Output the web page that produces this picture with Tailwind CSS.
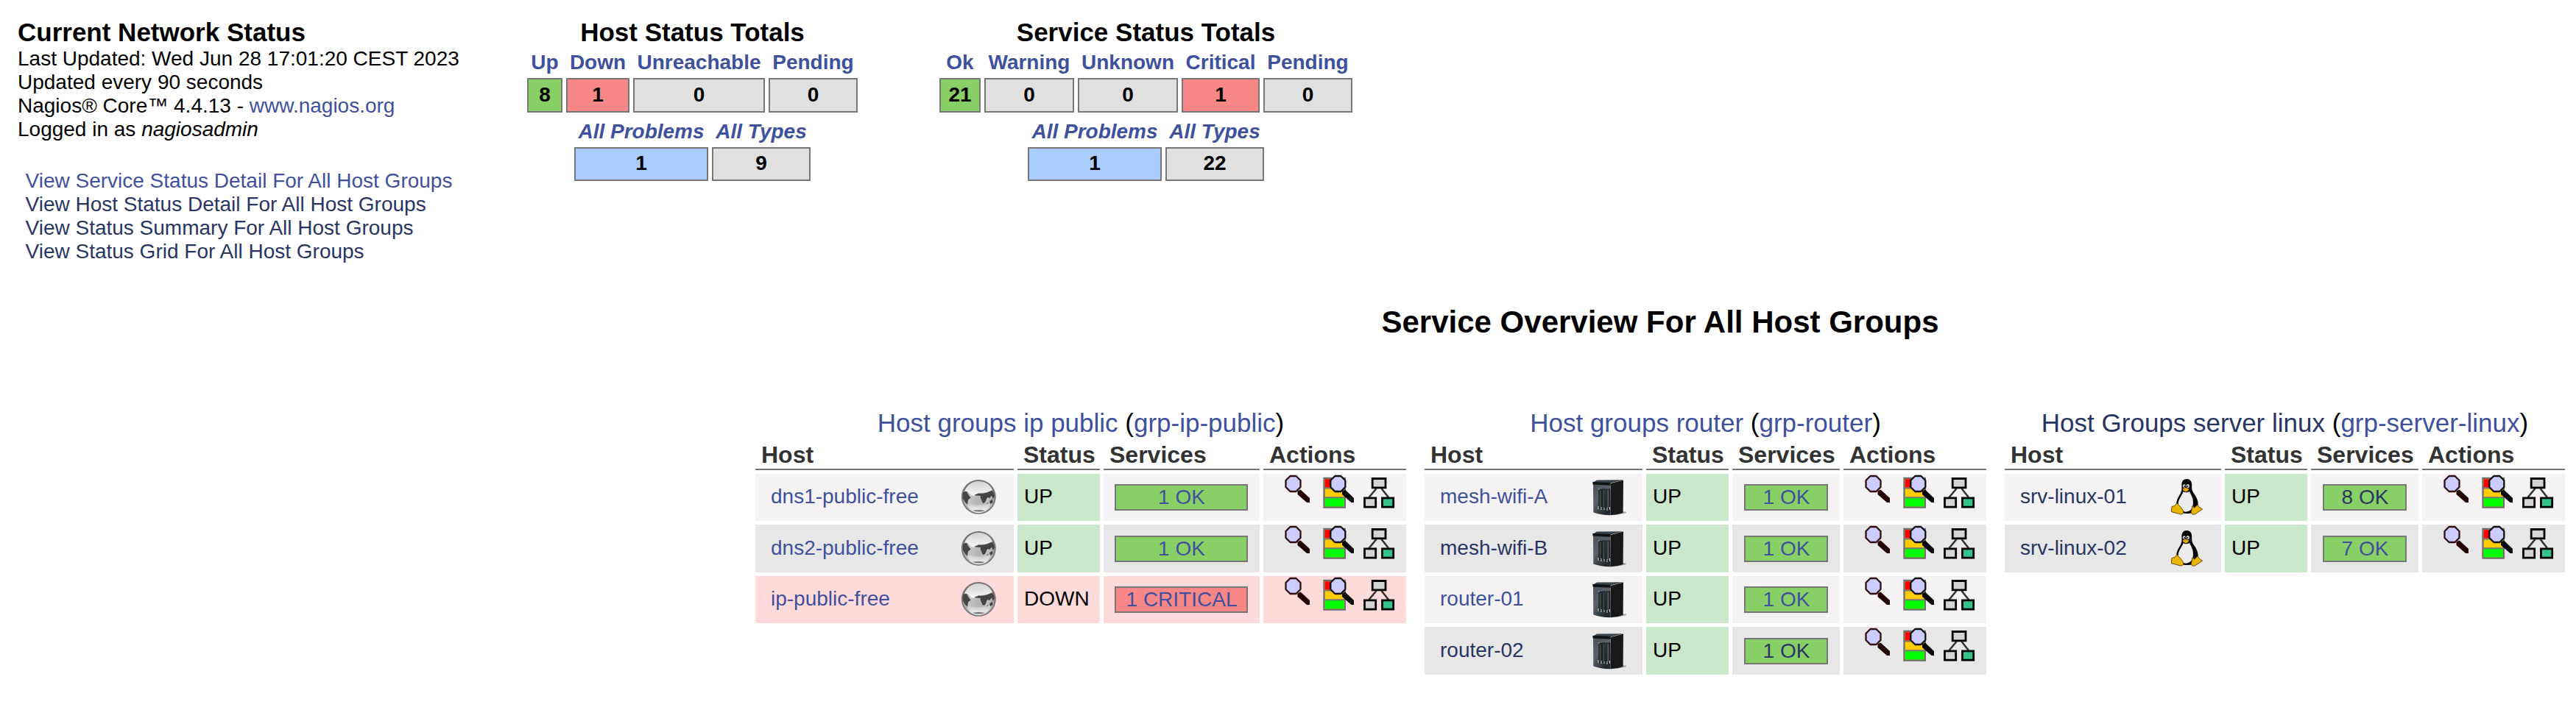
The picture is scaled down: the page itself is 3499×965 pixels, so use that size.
<!DOCTYPE html>
<html lang="en">
<head>
<meta charset="utf-8">
<title>Current Network Status</title>
<script src="https://cdn.jsdelivr.net/npm/@tailwindcss/browser@4"></script>
</head>
<body class="bg-white text-black w-[3499px] h-[965px] overflow-hidden text-[28px] leading-8 whitespace-nowrap" style="font-family:'Liberation Sans',Arial,sans-serif">

<svg class="absolute size-0">
  <defs>
    <radialGradient id="gl" cx=".5" cy=".62" r=".55"><stop offset="0" stop-color="#b0b0b0"/><stop offset=".55" stop-color="#c4c4c4"/><stop offset=".85" stop-color="#9c9c9c"/><stop offset="1" stop-color="#6a6a6a"/></radialGradient>
    <linearGradient id="gh" x1="0" y1="0" x2="0" y2="1"><stop offset="0" stop-color="#d2d2d2"/><stop offset="1" stop-color="#f6f6f6"/></linearGradient>
    <linearGradient id="gb" x1="0" y1="0" x2="0" y2="1"><stop offset="0" stop-color="#fff" stop-opacity="0"/><stop offset="1" stop-color="#f4f4f4"/></linearGradient>
    <linearGradient id="sf" x1="0" y1="0" x2=".6" y2="1"><stop offset="0" stop-color="#4a525a"/><stop offset=".5" stop-color="#59626a"/><stop offset="1" stop-color="#23292e"/></linearGradient>
  </defs>
  <symbol id="globe" viewBox="0 0 50 50">
    <circle cx="24.3" cy="24.4" r="22.8" fill="url(#gl)"/>
    <path d="M6 31Q24 40 43 31Q37 46 24.3 46.4Q12 46 6 31Z" fill="url(#gb)"/>
    <path d="M5 17Q10 3.500 24 3Q38 3 43 15Q36 19 24 19Q16 26 12 20Q8 15 5 17Z" fill="url(#gh)"/>
    <path d="M3 18L8 17L10 21L13.500 25.500L10 28.500L9 35L5.500 31L2.500 26Z" fill="#464646"/>
    <path d="M19 21Q22 21 24 19.500Q31 20.500 37 18Q41 15.500 43.500 16.500Q46 20 46 23L44 27L42 22.500L39 26L36 25L33 32L30 33L26.500 25L27 23L20 22.500Z" fill="#444"/>
    <path d="M39 30L43 28L43.500 32L40 34Z" fill="#444"/><path d="M35.500 34l2-2" stroke="#777" stroke-width="1.200"/>
    <path d="M16 43Q24 41 33 43Q25 46 16 43Z" fill="#777"/>
    <circle cx="24.300" cy="24.400" r="22.600" fill="none" stroke="#777" stroke-width="1.600"/>
  </symbol>
  <symbol id="server" viewBox="0 0 50 50">
    <path d="M40 44.500Q49 43.500 51 45.500Q46 48 32 49Z" fill="#888" opacity=".7"/>
    <path d="M28.700 6L46 1.500L45.600 46Q38 49 28.700 49.300Z" fill="#181818"/>
    <path d="M5 6.500L28.700 8V49.300Q15 49 5.300 45.500Z" fill="url(#sf)"/>
    <path d="M4.300 5L10 1.500L46 1.300L28.700 5.500Z" fill="#3a444c"/>
    <path d="M4.300 4L28.700 5V8.800L4.500 7.500Z" fill="#101214"/>
    <path d="M13 14.500h3.200v25H13zM17.800 14h3.200v26.500h-3.200zM23 14h4.500v26.500H23z" fill="#414b50" stroke="#15191c" stroke-width="1.200"/>
    <path d="M12 14.500l1.500-1M12 37v4M16 38v4M20 39v3M24 39v4M27.500 38v4" stroke="#cdd0d2" stroke-width="1"/>
  </symbol>
  <symbol id="tux" viewBox="0 0 50 51">
    <path d="M25.500 0C20 0 18 4 18.300 9C18.500 14 18.500 17 15.500 22C12.500 27 10.500 31 11 36C12 45 18 48 25 48C33 48 40 46 41 37C41.500 29 38 24 34.500 19C31.500 15 32.500 11 32.300 7C32 3 29.500 0 25.500 0Z" fill="#050505"/>
    <path d="M20.500 17.500Q25 20 29 17Q32 23 33.500 27C35 34 34.500 44 25 45.500C17 46 13.500 40 13.500 34C13.500 28 18.500 23 20.500 17.500Z" fill="#ececec"/>
    <ellipse cx="21.700" cy="9.800" rx="1.900" ry="2.500" fill="#ddd"/><ellipse cx="26.800" cy="9.800" rx="2.200" ry="2.600" fill="#ddd"/>
    <circle cx="22.200" cy="10.300" r="1" fill="#111"/><circle cx="26.300" cy="10.300" r="1.100" fill="#111"/>
    <path d="M19.500 14Q23 10.500 28.500 13.800Q27 17.500 24 17.800Q20.500 17 19.500 14Z" fill="#e8a800"/>
    <path d="M11.500 33.500L16 38L20.500 44Q21.500 48.500 17 49L4 45.500L4.500 38.500L9 37Z" fill="#e8b400" stroke="#6b4b10" stroke-width="1"/>
    <path d="M33 37.500L36 40L40.500 35.500L42 38.500L47 42L36.500 49Q31 50 31.700 45Z" fill="#e8b400" stroke="#6b4b10" stroke-width="1"/>
  </symbol>
  <symbol id="lens" viewBox="0 0 50 50">
    <path d="M27.500 20.500L40 32V38H36L23.500 27V22.500Z" fill="#240303"/>
    <path d="M13.500 2.500h8l6 6v9l-6 6h-8l-6-6v-9z" fill="#ccccff" stroke="#301010" stroke-width="2.300" stroke-linejoin="round" transform="translate(0 -.5)"/>
  </symbol>
  <symbol id="detail" viewBox="0 0 50 50">
    <path d="M5.500 5h28.300v39.500H5.500z" fill="#ffcc00" stroke="#6e6e6e" stroke-width="2.300"/>
    <path d="M6.700 6.200h26v11.500h-26z" fill="#f00"/><path d="M6.700 32h26v11.300h-26z" fill="#0f0"/>
    <path d="M6 18.500h27.500M6 31.200h27.500" stroke="#777" stroke-width="2"/>
    <path d="M34 20.500L46 32V38H42.500L30 27V22.500Z" fill="#0a0a0a"/>
    <path d="M20.300 2.500h8l6 6v9l-6 6h-8l-6-6v-9z" fill="#ccccff" stroke="#111" stroke-width="2.300" stroke-linejoin="round" transform="translate(0 -.5)"/>
  </symbol>
  <symbol id="map" viewBox="0 0 50 50">
    <path d="M22.500 19L12.500 31M29.500 19L39 31" stroke="#333" stroke-width="2.600"/>
    <path d="M17.200 5.500h17.800v12.300H17.200zM6.500 31.800h15.200v12.300H6.500z" fill="#d4d4d4" stroke="#000" stroke-width="2.800"/>
    <path d="M30.500 31.800h15.200v12.300H30.500z" fill="#33c28a" stroke="#000" stroke-width="2.800"/>
  </symbol>
</svg>

<header class="flex h-[413px] pt-6">
  <section class="ml-[24px] w-[692px]">
    <h1 class="text-[35px] leading-[39px] mb-px font-bold">Current Network Status</h1>
    <p>Last Updated: Wed Jun 28 17:01:20 CEST 2023</p>
    <p>Updated every 90 seconds</p>
    <p>Nagios® Core™ 4.4.13 - <a class="text-[#3f509c]">www.nagios.org</a></p>
    <p>Logged in as <i>nagiosadmin</i></p>
    <nav class="mt-[38px] ml-[10.500px] flex flex-col text-[#293562]">
      <a class="text-[#3f509c]">View Service Status Detail For All Host Groups</a>
      <a>View Host Status Detail For All Host Groups</a>
      <a>View Status Summary For All Host Groups</a>
      <a>View Status Grid For All Host Groups</a>
    </nav>
  </section>

  <section class="w-[449px] text-center font-bold">
    <h2 class="text-[35px] leading-[39px]">Host Status Totals</h2>
    <div class="mt-[5px] grid grid-cols-[48px_86px_179px_121px] grid-rows-[38px_47px] gap-x-[5px] leading-[34px] text-[#3f509c]">
      <a>Up</a><a>Down</a><a>Unreachable</a><a>Pending</a>
      <b class="flex items-center justify-center pb-[2px] border-2 border-[#777] bg-[#88d066] text-black">8</b>
      <b class="flex items-center justify-center pb-[2px] border-2 border-[#777] bg-[#f88888] text-black">1</b>
      <b class="flex items-center justify-center pb-[2px] border-2 border-[#777] bg-[#e0e0e0] text-black">0</b>
      <b class="flex items-center justify-center pb-[2px] border-2 border-[#777] bg-[#e0e0e0] text-black">0</b>
    </div>
    <div class="mt-[9px] ml-16 grid grid-cols-[182px_134px] grid-rows-[38px_46px] gap-x-[5px] leading-[34px] text-[#3f509c]">
      <a class="italic">All Problems</a><a class="italic">All Types</a>
      <b class="flex items-center justify-center pb-[2px] border-2 border-[#777] bg-[#aaccff] text-black">1</b>
      <b class="flex items-center justify-center pb-[2px] border-2 border-[#777] bg-[#e0e0e0] text-black">9</b>
    </div>
  </section>

  <section class="ml-[111px] w-[561px] text-center font-bold">
    <h2 class="text-[35px] leading-[39px]">Service Status Totals</h2>
    <div class="mt-[5px] grid grid-cols-[56px_122px_136px_106px_121px] grid-rows-[38px_47px] gap-x-[5px] leading-[34px] text-[#3f509c]">
      <a>Ok</a><a>Warning</a><a>Unknown</a><a>Critical</a><a>Pending</a>
      <b class="flex items-center justify-center pb-[2px] border-2 border-[#777] bg-[#88d066] text-black">21</b>
      <b class="flex items-center justify-center pb-[2px] border-2 border-[#777] bg-[#e0e0e0] text-black">0</b>
      <b class="flex items-center justify-center pb-[2px] border-2 border-[#777] bg-[#e0e0e0] text-black">0</b>
      <b class="flex items-center justify-center pb-[2px] border-2 border-[#777] bg-[#f88888] text-black">1</b>
      <b class="flex items-center justify-center pb-[2px] border-2 border-[#777] bg-[#e0e0e0] text-black">0</b>
    </div>
    <div class="mt-[9px] ml-[120px] grid grid-cols-[182px_134px] grid-rows-[38px_46px] gap-x-[5px] leading-[34px] text-[#3f509c]">
      <a class="italic">All Problems</a><a class="italic">All Types</a>
      <b class="flex items-center justify-center pb-[2px] border-2 border-[#777] bg-[#aaccff] text-black">1</b>
      <b class="flex items-center justify-center pb-[2px] border-2 border-[#777] bg-[#e0e0e0] text-black">22</b>
    </div>
  </section>
</header>

<main class="ml-[1026px] w-[2458px]">
  <h2 class="text-center text-[42px] leading-[48px] pt-px font-bold">Service Overview For All Host Groups</h2>
  <div id="groups" class="mt-[93px] flex items-start gap-[25px]"></div>
</main>

<script>
const link = 'text-[#3f509c]', seen = 'text-[#293562]';
const groups = [
  { title: 'Host groups ip public', name: 'grp-ip-public', tc: link, icon: 'globe',
    cols: 'grid-cols-[351px_112px_212px_194px]', badge: 'w-[181px] mr-px',
    rows: [['dns1-public-free', 'UP', '1 OK', link, link], ['dns2-public-free', 'UP', '1 OK', link, link], ['ip-public-free', 'DOWN', '1 CRITICAL', link, link]] },
  { title: 'Host groups router', name: 'grp-router', tc: link, icon: 'server',
    cols: 'grid-cols-[296px_112px_146px_194px]', badge: 'w-[114px]',
    rows: [['mesh-wifi-A', 'UP', '1 OK', link, link], ['mesh-wifi-B', 'UP', '1 OK', seen, link], ['router-01', 'UP', '1 OK', link, link], ['router-02', 'UP', '1 OK', seen, seen]] },
  { title: 'Host Groups server linux', name: 'grp-server-linux', tc: seen, icon: 'tux',
    cols: 'grid-cols-[294px_112px_146px_194px]', badge: 'w-[114px]',
    rows: [['srv-linux-01', 'UP', '8 OK', seen, seen], ['srv-linux-02', 'UP', '7 OK', seen, link]] },
];
const head = t => `<div class="h-10 border-b-2 border-[#777] pl-[8px] text-[32px] leading-[39px] font-bold text-[#333]">${t}</div>`;
const use = id => `<svg class="size-[50px]"><use href="#${id}"/></svg>`;
document.getElementById('groups').innerHTML = groups.map(g => `
  <section>
    <h3 class="text-center text-[35px] leading-[39px] mb-[5px]"><a class="${g.tc}">${g.title}</a> (<a class="${link}">${g.name}</a>)</h3>
    <div class="grid ${g.cols} gap-x-[5px] gap-y-[5px]">
      ${['Host', 'Status', 'Services', 'Actions'].map(head).join('')}
      ${g.rows.map(([host, st, svc, hc, sc], i) => {
        const down = st === 'DOWN';
        const bg = down ? 'bg-[#ffdada]' : i % 2 ? 'bg-[#e7e7e7]' : 'bg-[#f4f2f3]';
        const h = i % 2 ? 'h-[65px]' : 'h-16';
        return `
        <div class="${bg} ${h} flex items-center justify-between pl-[21px] pr-[22px]"><a class="${hc} pb-[2px]">${host}</a>${use(g.icon)}</div>
        <div class="${down ? bg : 'bg-[#cbe7cb]'} ${h} flex items-center pl-[9px] pb-[2px]">${st}</div>
        <div class="${bg} ${h} flex items-center justify-center"><a class="${g.badge} ${sc} ${down ? 'bg-[#f88888]' : 'bg-[#88d066]'} h-9 border-2 border-[#777] pl-px text-center leading-[31px]">${svc}</a></div>
        <div class="${bg} ${h} flex items-start gap-1 pl-[23px] pt-px">${use('lens')}${use('detail')}${use('map')}</div>`;
      }).join('')}
    </div>
  </section>`).join('');
</script>
</body>
</html>
